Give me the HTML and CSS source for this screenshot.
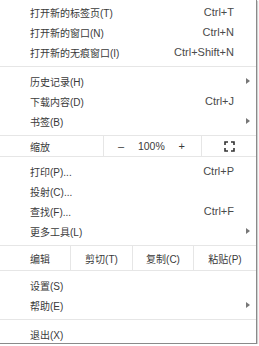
FILE: index.html
```html
<!DOCTYPE html>
<html>
<head>
  <title>菜单</title>
  <link rel="stylesheet" href="styles.css">
</head>
<body>
  <div class="menu">
    <div class="group first">
      <div class="item"><span class="label">打开新的标签页(T)</span><span class="key">Ctrl+T</span><span></span></div>
      <div class="item"><span class="label">打开新的窗口(N)</span><span class="key">Ctrl+N</span><span></span></div>
      <div class="item"><span class="label">打开新的无痕窗口(I)</span><span class="key">Ctrl+Shift+N</span><span></span></div>
    </div>

    <div class="group">
      <div class="item"><span class="label">历史记录(H)</span><span class="key"></span><span class="arrow"></span></div>
      <div class="item"><span class="label">下载内容(D)</span><span class="key">Ctrl+J</span><span></span></div>
      <div class="item"><span class="label">书签(B)</span><span class="key"></span><span class="arrow"></span></div>
    </div>

    <div class="zoom-row">
      <div class="cell left">缩放</div>
      <div class="cell zoom-ctrl">
        <span>–</span>
        <span class="pct">100%</span>
        <span>+</span>
      </div>
      <div class="cell">
        <svg width="11" height="11" viewBox="0 0 11 11" fill="none" stroke="#333" stroke-width="1.6">
          <path d="M1 4V1h3M7 1h3v3M10 7v3H7M4 10H1V7"/>
        </svg>
      </div>
    </div>

    <div class="group">
      <div class="item"><span class="label">打印(P)...</span><span class="key">Ctrl+P</span><span></span></div>
      <div class="item"><span class="label">投射(C)...</span><span class="key"></span><span></span></div>
      <div class="item"><span class="label">查找(F)...</span><span class="key">Ctrl+F</span><span></span></div>
      <div class="item"><span class="label">更多工具(L)</span><span class="key"></span><span class="arrow"></span></div>
    </div>

    <div class="edit-row">
      <div class="cell left">编辑</div>
      <div class="cell">剪切(T)</div>
      <div class="cell">复制(C)</div>
      <div class="cell">粘贴(P)</div>
    </div>

    <div class="group">
      <div class="item"><span class="label">设置(S)</span><span class="key"></span><span></span></div>
      <div class="item"><span class="label">帮助(E)</span><span class="key"></span><span class="arrow"></span></div>
    </div>

    <div class="group sep">
      <div class="item"><span class="label">退出(X)</span><span class="key"></span><span></span></div>
    </div>
  </div>
</body>
</html>
```

FILE: styles.css
```css
body {
  margin: 0;
  background: #fff;
  font-family: "Liberation Sans", "Noto Sans CJK SC", sans-serif;
  color: #3a3a3a;
}

.menu {
  width: 256px;
  height: 343px;
  background: #fff;
  border-right: 1px solid #8a8a8a;
  border-bottom: 1px solid #8a8a8a;
  box-shadow: 1px 1px 1px #d0d0d0;
}

.group {
  padding: 4px 0;
}

.group.first {
  padding-top: 2px;
  border-bottom: 1px solid #e6e6e6;
}

.group.sep {
  border-top: 1px solid #e6e6e6;
  padding-top: 4px;
}

.item {
  display: grid;
  grid-template-columns: 1fr auto 22px;
  align-items: center;
  height: 20px;
  padding-left: 30px;
}

.label {
  font-size: 10px;
}

.key {
  font-size: 11px;
  color: #4a4a4a;
}

.arrow {
  width: 0;
  height: 0;
  margin-left: 12px;
  border-top: 3px solid transparent;
  border-bottom: 3px solid transparent;
  border-left: 4px solid #777;
}

.zoom-row,
.edit-row {
  display: grid;
  border-top: 1px solid #e6e6e6;
  border-bottom: 1px solid #e6e6e6;
  font-size: 10px;
}

.zoom-row {
  grid-template-columns: 103px 98px 1fr;
  height: 20px;
}

.edit-row {
  grid-template-columns: 70px 62px 61px 1fr;
  height: 24px;
}

.cell {
  display: flex;
  align-items: center;
  justify-content: center;
  border-left: 1px solid #e6e6e6;
}

.cell.left {
  justify-content: flex-start;
  padding-left: 30px;
  border-left: none;
}

.zoom-ctrl {
  justify-content: space-between;
  padding: 0 16px 0 14px;
  font-size: 11px;
}

.zoom-ctrl .pct {
  font-size: 10.5px;
}
```
